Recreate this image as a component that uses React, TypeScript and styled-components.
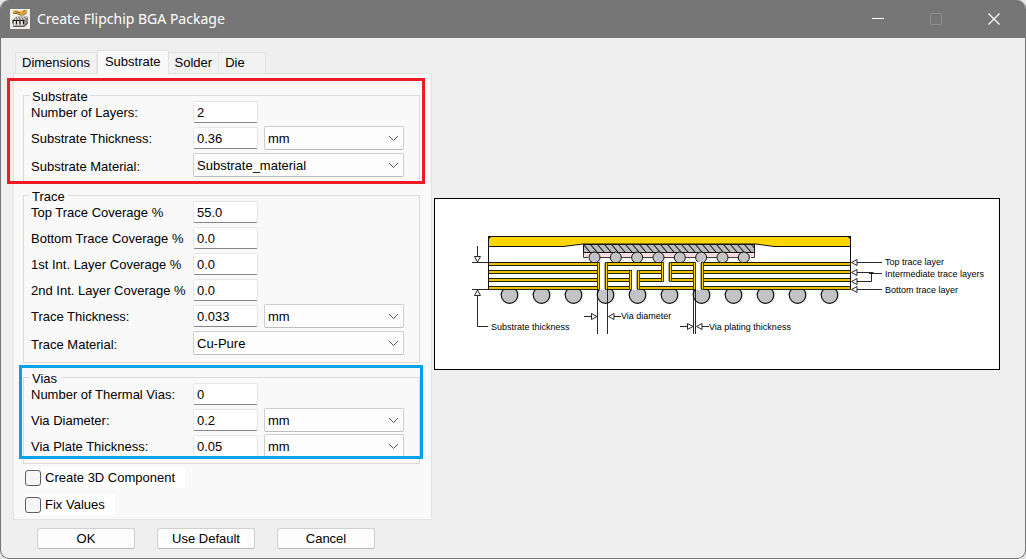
import React, { useState } from 'react';
import styled, { createGlobalStyle } from 'styled-components';

const GlobalStyle = createGlobalStyle`
  *, *::before, *::after { box-sizing: border-box; }
  body {
    margin: 0;
    background: #e6e6e6;
    color: #000;
    font: 13px/16px "Liberation Sans", Arial, sans-serif;
  }
`;

const Window = styled.div`
  display: flex;
  flex-direction: column;
  min-height: 100vh;
  border-radius: 9px;
  overflow: hidden;
  background: #efefef;
  border: solid #767676;
  border-width: 0 1px 1px;
`;

const TitleBar = styled.header`
  display: flex;
  align-items: center;
  height: 38px;
  padding: 0 2px 0 9px;
  background: #767676;
  color: #fff;
`;

const Title = styled.h1`
  flex: 1;
  margin: 0 0 0 7px;
  font: 400 14px/20px "Noto Sans", "Open Sans", sans-serif;
`;

const CaptionButton = styled.button`
  display: grid;
  place-items: center;
  width: 58px;
  height: 38px;
  padding: 0;
  border: 0;
  background: none;
  color: #fff;

  &:disabled { color: #8f8f8f; }
`;

const Body = styled.main`
  display: flex;
  align-items: flex-start;
  padding: 11px 25px 9px 12px;
`;

const FormColumn = styled.form`
  flex: 0 0 419px;
`;

const TabList = styled.div`
  display: flex;
  align-items: flex-end;
  height: 24px;
  padding-left: 2px;
`;

const Tab = styled.button<{ $active?: boolean }>`
  position: relative;
  height: ${p => (p.$active ? 24 : 21)}px;
  margin-bottom: ${p => (p.$active ? -1 : 0)}px;
  padding: ${p => (p.$active ? '0 7px 2px' : '0 6px')};
  border: 1px solid #e3e3e3;
  border-bottom: 0;
  border-left-width: ${p => (p.$active ? 1 : 0)}px;
  background: ${p => (p.$active ? '#f9f9f9' : '#f2f2f2')};
  font: inherit;
  color: inherit;

  &:first-child { border-left-width: 1px; }
  &:last-child { padding-right: 20px; }
`;

const Panel = styled.div`
  padding: 21px 11px 4px 9px;
  border: 1px solid #e3e3e3;
  background: #f9f9f9;
`;

const Group = styled.fieldset<{ $bottom: number; $after: number }>`
  position: relative;
  min-width: 0;
  margin: 0 0 ${p => p.$after}px;
  padding: 3px 15px ${p => p.$bottom}px 7px;
  border: 1px solid #dcdcdc;
`;

const GroupTitle = styled.legend`
  position: absolute;
  top: -7px;
  left: 5px;
  padding: 0 3px;
  background: #f9f9f9;
  line-height: 15px;
`;

const Highlight = styled.div<{ $color: string; $inset: string }>`
  position: absolute;
  inset: ${p => p.$inset};
  border: 3px solid ${p => p.$color};
  pointer-events: none;
`;

const Label = styled.label`
  white-space: nowrap;
`;

const Row = styled.div<{ $tall?: boolean }>`
  display: grid;
  grid-template-columns: 162px 65px 1fr;
  align-items: center;
  height: ${p => (p.$tall ? 28 : 26)}px;

  > ${Label} { padding-top: ${p => (p.$tall ? 3 : 1)}px; }
`;

const TextField = styled.input`
  width: 65px;
  height: 22px;
  padding: 0 3px;
  border: 1px solid #e6e6e6;
  border-bottom-color: #868686;
  border-radius: 2px;
  background: #fff;
  font: inherit;
  color: inherit;
`;

const SelectBox = styled.div<{ $wide?: boolean }>`
  display: grid;
  align-items: center;
  grid-column: ${p => (p.$wide ? '2 / 4' : '3')};
  margin-left: ${p => (p.$wide ? 0 : 6)}px;

  > * { grid-area: 1 / 1; }
  > svg { justify-self: end; margin-right: 5px; pointer-events: none; }
`;

const Select = styled.select`
  appearance: none;
  width: 100%;
  height: 24px;
  padding: 1px 20px 0 3px;
  border: 1px solid #cfcfcf;
  border-bottom-color: #bdbdbd;
  border-radius: 2px;
  background: #fdfdfd;
  font: inherit;
  color: inherit;
`;

const CheckLabel = styled.label`
  display: flex;
  align-items: center;
  gap: 4px;
  width: fit-content;
  height: 21px;
  margin-left: 2px;
  padding-right: 10px;
  background: #fff;

  & + & { margin-top: 6px; }
`;

const CheckBox = styled.input`
  appearance: none;
  width: 16px;
  height: 16px;
  margin: 0;
  border: 1px solid #5e5e5e;
  border-radius: 3px;
  background: #f6f6f6;

  &:checked { background: #767676; }
`;

const ButtonRow = styled.div`
  display: flex;
  gap: 22px;
  padding: 8px 0 0 24px;
`;

const PushButton = styled.button`
  width: 98px;
  height: 21px;
  padding: 0;
  border: 1px solid #d0d0d0;
  border-bottom-color: #bcbcbc;
  border-radius: 3px;
  background: #fdfdfd;
  font: inherit;
  color: inherit;
`;

const Preview = styled.figure`
  flex: 1;
  min-width: 0;
  margin: 149px 0 0 2px;
  border: 1px solid #000;
  background: #fff;

  svg { display: block; width: 100%; height: auto; }
`;

const Chevron = () => (
  <svg width="11" height="7" viewBox="0 0 11 7" fill="none" stroke="#555" aria-hidden="true">
    <path d="M1 1l4.500 4.500L10 1" />
  </svg>
);

const AppIcon = () => (
  <svg width="20" height="20" viewBox="0 0 20 20" aria-hidden="true">
    <rect width="20" height="20" fill="#f0efec" />
    <path d="M3 1.500h4l3 1 4-1.500h3v2l-3 2.500h-4l-3-1.500H3z" fill="#e3a63a" />
    <path d="M3 4.500h4l3 1.500h4l3-2.500M5 2.500l5 1.500M13 2.500l2-1" fill="none" stroke="#94681f" />
    <path d="M2.500 11l4-3.500H18l-1 7-3 3.500H3z" fill="#96958f" />
    <path d="M14.500 11L18 7.500v7l-3.500 4z" fill="#8c8b86" />
    <path d="M2.500 11.500h12M6.500 11.500v3.500M10 11.500v3.500M13.500 11.500v3.500M3 11.500v3" stroke="#1d1d1d" fill="none" />
    <path d="M4.700 12v4.500M8.200 12v4.500M11.700 12v4.500" stroke="#ecebe6" strokeWidth="1.600" />
    <path d="M5 10h1M8 10h1M11 10h1M14 10h1M7 8.500h1M10 8.500h1M13 8.500h1M16 8.500h1" stroke="#e4e3de" />
    <path d="M3.500 17.500h10.500l3.500-3.500" stroke="#55544f" fill="none" />
  </svg>
);

interface FieldRowProps {
  label: string;
  value?: string;
  unit?: boolean;
  material?: string;
}

const FieldRow = ({ label, value, unit, material }: FieldRowProps) => {
  const id = label.toLowerCase().replace(/[^a-z0-9]+/g, '-');
  return (
    <Row $tall={!!material}>
      <Label htmlFor={id}>{label}</Label>
      {value !== undefined && <TextField id={id} type="text" defaultValue={value} />}
      {unit && (
        <SelectBox>
          <Select aria-label={`${label} unit`} defaultValue="mm">
            <option>mm</option>
          </Select>
          <Chevron />
        </SelectBox>
      )}
      {material && (
        <SelectBox $wide>
          <Select id={id} defaultValue={material}>
            <option>{material}</option>
          </Select>
          <Chevron />
        </SelectBox>
      )}
    </Row>
  );
};

const layerTops = [64.5, 72.5, 80.5, 88.5];
const dieBalls = Array.from({ length: 8 }, (_, i) => 159.5 + i * 21.33);
const solderBalls = Array.from({ length: 11 }, (_, i) => 74.5 + i * 32);
const vias = [
  { x: 162, top: 64, bottom: 93 },
  { x: 194, top: 72, bottom: 93 },
  { x: 226, top: 64, bottom: 85 },
  { x: 258, top: 64, bottom: 93 },
];

/* Arrow head with its tip at (x, y); points left until turned. */
const Head = ({ x, y, turn = 0 }: { x: number; y: number; turn?: number }) => (
  <path d="M0.500 0L6 -3V3Z" transform={`translate(${x} ${y}) rotate(${turn})`} fill="#fff" stroke="#111" strokeWidth="0.900" />
);

const PackageDiagram = () => (
  <svg viewBox="0 1 564 170" role="img" aria-label="Package cross section">
    <defs>
      <pattern id="hatch" width="7" height="8" patternUnits="userSpaceOnUse" x="148" y="46">
        <path d="M0 0L7 8M-7 0L0 8M7 0l7 8" stroke="#222" strokeWidth="1.100" />
      </pattern>
    </defs>
    <g stroke="#111">
      <path d="M53.500 38.500H415.500V48.500H339L321 46H148L128 48.500H53.500Z" fill="#ffd500" />
      <path d="M53.500 38V91M415.500 38V91" />
      <path d="M54 39h2l-2 2zM415 39h-2l2 2z" fill="#111" stroke="none" />
      <rect x="148.500" y="54.500" width="171" height="5" fill="#fbdcdc" stroke="none" />
      <path d="M148.500 54V59.500H153M319.500 54V59.500H316M154 59.500H315" fill="none" strokeWidth="0.800" />
      <rect x="148.500" y="46.500" width="171" height="8" fill="#bcbcbc" />
      <rect x="148.500" y="46.500" width="171" height="8" fill="url(#hatch)" />
      {dieBalls.map(x => <circle key={x} cx={x} cy="59.500" r="5.500" fill="#c3c2c4" />)}
      {solderBalls.map(x => <circle key={x} cx={x} cy="97" r="8.300" fill="#c3c2c4" strokeWidth="1.200" />)}
      <rect x="53.500" y="64.500" width="362" height="26" fill="#fff" />
      {layerTops.map(y => (
        <rect key={y} x="53.500" y={y} width="362" height="3" fill="#e8c000" strokeWidth="0.900" />
      ))}
      {vias.map(v => (
        <g key={v.x}>
          <rect x={v.x} y={v.top} width="11" height={v.bottom - v.top - 1} fill="#fff" stroke="none" />
          <rect x={v.x + 0.5} y={v.top + 0.5} width="2" height={v.bottom - v.top - 2} fill="#ffd500" strokeWidth="0.800" />
          <rect x={v.x + 8.5} y={v.top + 0.5} width="2" height={v.bottom - v.top - 2} fill="#ffd500" strokeWidth="0.800" />
          <path d={`M${v.x + 7.5} ${v.top + 1}V${v.bottom - 2}`} stroke="#aaa" />
        </g>
      ))}
      <g fill="none" strokeWidth="0.900">
        <path d="M37 64.500H53M37 91.500H53M42.500 48V58M42.500 97V128.500H53" />
        <path d="M162.500 91V136M172.500 91V136M258.500 91V136M260.500 91V136" />
        <path d="M149 118.500H157M179 118.500H186M245 128.500H252M267 128.500H274" />
        <path d="M422 64.500H447M422 74.500H438.500M434 75.500H447M422 83.500H436.500V74M422 91.500H447" />
      </g>
    </g>
    <Head x={42.5} y={64.5} turn={270} />
    <Head x={42.5} y={91.5} turn={90} />
    <Head x={162.5} y={118.5} turn={180} />
    <Head x={173} y={118.5} />
    <Head x={258.5} y={128.5} turn={180} />
    <Head x={261} y={128.5} />
    <Head x={416} y={64.5} />
    <Head x={416} y={74.5} />
    <Head x={416} y={83.5} />
    <Head x={416} y={91.5} />
    <g fontFamily='"Liberation Sans", Arial, sans-serif' fontSize="9" fill="#000">
      <text x="56" y="132">Substrate thickness</text>
      <text x="186" y="121">Via diameter</text>
      <text x="274" y="132">Via plating thickness</text>
      <text x="450" y="67">Top trace layer</text>
      <text x="450" y="79">Intermediate trace layers</text>
      <text x="450" y="95">Bottom trace layer</text>
    </g>
  </svg>
);

const tabs = ['Dimensions', 'Substrate', 'Solder', 'Die'];

export default function App() {
  const [active, setActive] = useState('Substrate');
  return (
    <>
      <GlobalStyle />
      <Window>
        <TitleBar>
          <AppIcon />
          <Title>Create Flipchip BGA Package</Title>
          <CaptionButton aria-label="Minimize">
            <svg width="12" height="12"><path d="M0 5.500H12" stroke="currentColor" /></svg>
          </CaptionButton>
          <CaptionButton aria-label="Maximize" disabled>
            <svg width="12" height="12"><rect x="0.500" y="0.500" width="11" height="11" rx="1" fill="none" stroke="currentColor" /></svg>
          </CaptionButton>
          <CaptionButton aria-label="Close">
            <svg width="12" height="12"><path d="M0.500 0.500l11 11M11.500 0.500l-11 11" stroke="currentColor" strokeWidth="1.200" /></svg>
          </CaptionButton>
        </TitleBar>
        <Body>
          <FormColumn onSubmit={e => e.preventDefault()}>
            <TabList role="tablist">
              {tabs.map(name => (
                <Tab
                  key={name}
                  type="button"
                  role="tab"
                  aria-selected={name === active}
                  $active={name === active}
                  onClick={() => setActive(name)}
                >
                  {name}
                </Tab>
              ))}
            </TabList>
            <Panel role="tabpanel">
              <Group $bottom={2} $after={13}>
                <GroupTitle>Substrate</GroupTitle>
                <FieldRow label="Number of Layers:" value="2" />
                <FieldRow label="Substrate Thickness:" value="0.36" unit />
                <FieldRow label="Substrate Material:" material="Substrate_material" />
                <Highlight $color="#ed1c24" $inset="-18px -6px -3px -17px" />
              </Group>
              <Group $bottom={5} $after={14}>
                <GroupTitle>Trace</GroupTitle>
                <FieldRow label="Top Trace Coverage %" value="55.0" />
                <FieldRow label="Bottom Trace Coverage %" value="0.0" />
                <FieldRow label="1st Int. Layer Coverage %" value="0.0" />
                <FieldRow label="2nd Int. Layer Coverage %" value="0.0" />
                <FieldRow label="Trace Thickness:" value="0.033" unit />
                <FieldRow label="Trace Material:" material="Cu-Pure" />
              </Group>
              <Group $bottom={4} $after={3}>
                <GroupTitle>Vias</GroupTitle>
                <FieldRow label="Number of Thermal Vias:" value="0" />
                <FieldRow label="Via Diameter:" value="0.2" unit />
                <FieldRow label="Via Plate Thickness:" value="0.05" unit />
                <Highlight $color="#00a2e8" $inset="-13px -4px 4px -5px" />
              </Group>
              <CheckLabel><CheckBox type="checkbox" />Create 3D Component</CheckLabel>
              <CheckLabel><CheckBox type="checkbox" />Fix Values</CheckLabel>
            </Panel>
            <ButtonRow>
              <PushButton type="submit">OK</PushButton>
              <PushButton type="button">Use Default</PushButton>
              <PushButton type="button">Cancel</PushButton>
            </ButtonRow>
          </FormColumn>
          <Preview>
            <PackageDiagram />
          </Preview>
        </Body>
      </Window>
    </>
  );
}
